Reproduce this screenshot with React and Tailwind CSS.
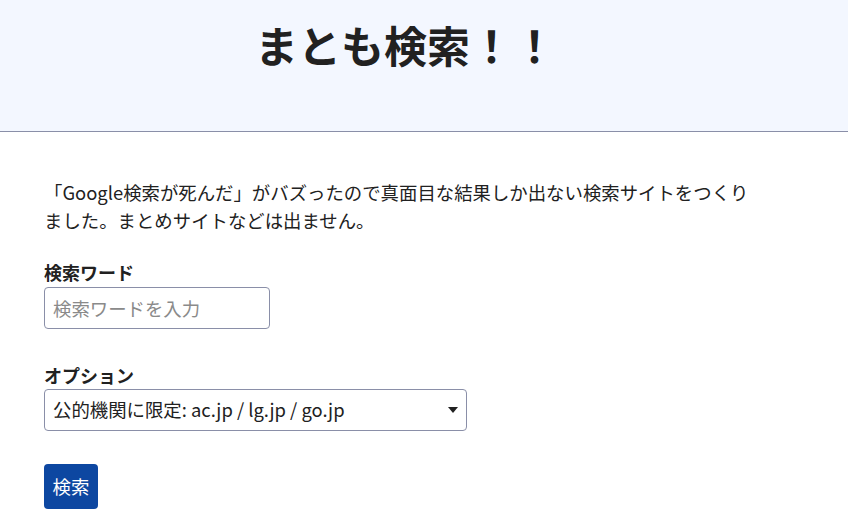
import React, { useState } from "react";

const options = [
  "公的機関に限定: ac.jp / lg.jp / go.jp",
  "制限なし",
];

export default function App() {
  const [word, setWord] = useState("");
  const [option, setOption] = useState(options[0]);

  return (
    <div
      className="min-h-screen bg-white text-[#212121]"
      style={{ fontFamily: '"Noto Sans CJK JP", "Noto Sans", sans-serif' }}
    >
      {/* Header */}
      <header className="h-[132px] bg-[#f3f7ff] border-b border-[#8a8fa8]">
        <h1 className="pl-[255px] pt-[14px] text-[43px] leading-[60px] font-bold">
          まとも検索！！
        </h1>
      </header>

      {/* Body */}
      <main className="px-[44px] pt-[46px]">
        <p className="w-[712px] text-[18.4px] leading-[28px]">
          「Google検索が死んだ」がバズったので真面目な結果しか出ない検索サイトをつくりました。まとめサイトなどは出ません。
        </p>

        <div className="mt-[26px]">
          <label className="block text-[18px] leading-[24px] font-bold">
            検索ワード
          </label>
          <input
            value={word}
            onChange={(e) => setWord(e.target.value)}
            placeholder="検索ワードを入力"
            className="mt-[3px] w-[226px] h-[42px] px-[8px] text-[18.4px] border border-[#8a8fa8] rounded-[4px] placeholder:text-[#8a8a8a] outline-none"
          />
        </div>

        <div className="mt-[34px]">
          <label className="block text-[18px] leading-[24px] font-bold">
            オプション
          </label>
          <div className="relative mt-[2px] w-[423px]">
            <select
              value={option}
              onChange={(e) => setOption(e.target.value)}
              className="appearance-none w-full h-[42px] pl-[8px] pr-[30px] text-[18.4px] bg-white border border-[#8a8fa8] rounded-[4px] outline-none"
            >
              {options.map((o) => (
                <option key={o}>{o}</option>
              ))}
            </select>
            <svg
              className="absolute right-[9px] top-[18px] pointer-events-none"
              width="10"
              height="6"
              viewBox="0 0 10 6"
            >
              <path d="M0 0h10L5 6z" fill="#212121" />
            </svg>
          </div>
        </div>

        <button className="mt-[33px] w-[54px] h-[45px] rounded-[4px] bg-[#0d47a1] text-white text-[18.4px]">
          検索
        </button>
      </main>
    </div>
  );
}
